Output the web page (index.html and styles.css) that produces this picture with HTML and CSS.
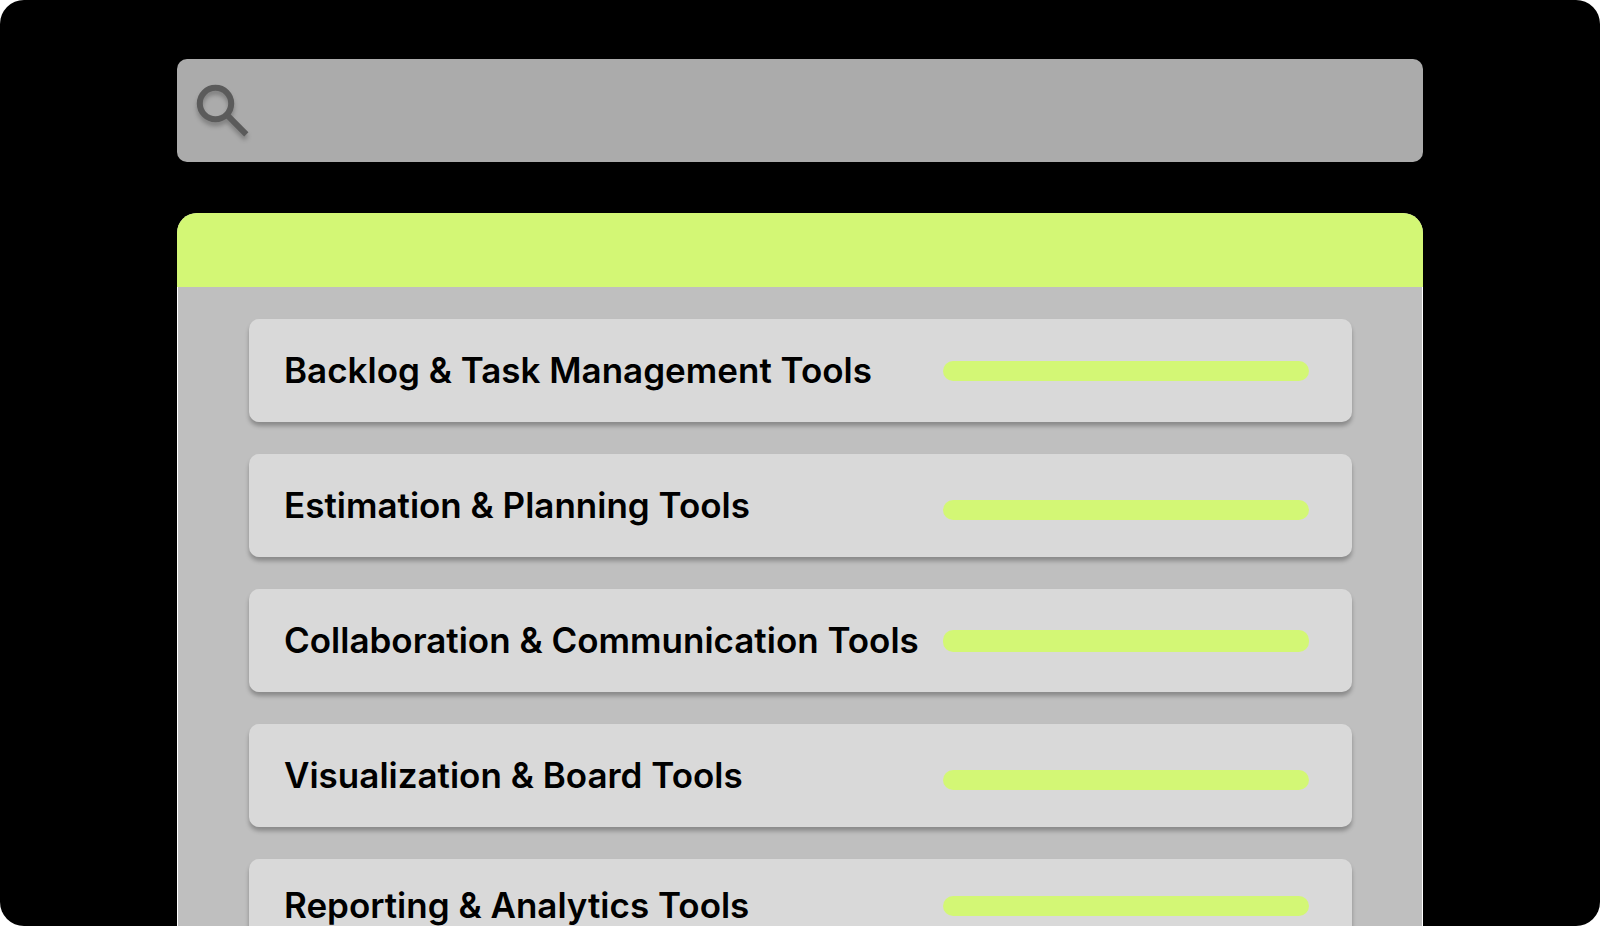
FILE: index.html
```html
<!DOCTYPE html>
<html lang="en">
<head>
<meta charset="utf-8">
<meta name="viewport" content="width=device-width, initial-scale=1">
<title>Tools</title>
<link rel="stylesheet" href="styles.css">
</head>
<body>
<main class="screen">
  <form class="search" role="search">
    <label class="search-label" for="query" aria-label="Search">
      <svg class="search-icon" viewBox="0 0 52 52" aria-hidden="true">
        <circle cx="18.5" cy="18.5" r="15.7" fill="none" stroke="#5b5b5b" stroke-width="6"/>
        <path d="M30.2 30.2L49.3 49.3" fill="none" stroke="#5b5b5b" stroke-width="6"/>
      </svg>
    </label>
    <input class="search-input" id="query" type="search">
  </form>
  <section class="panel">
    <header class="panel-header"></header>
    <ul class="list">
      <li class="card"><span class="card-title">Backlog &amp; Task Management Tools</span><span class="bar"></span></li>
      <li class="card"><span class="card-title">Estimation &amp; Planning Tools</span><span class="bar bar-low"></span></li>
      <li class="card"><span class="card-title">Collaboration &amp; Communication Tools</span><span class="bar bar-thick"></span></li>
      <li class="card"><span class="card-title">Visualization &amp; Board Tools</span><span class="bar bar-low"></span></li>
      <li class="card card-last"><span class="card-title">Reporting &amp; Analytics Tools</span><span class="bar"></span></li>
    </ul>
  </section>
</main>
</body>
</html>
```

FILE: styles.css
```css
* {
  box-sizing: border-box;
}

body {
  margin: 0;
  background: #fff;
  font-family: Inter, "Liberation Sans", sans-serif;
}

.screen {
  display: flex;
  flex-direction: column;
  gap: 51px;
  height: 100vh;
  padding: 59px 177px 0;
  overflow: hidden;
  background: #000;
  border-radius: 24px;
}

.search {
  display: flex;
  flex: none;
  align-items: center;
  gap: 16px;
  height: 103px;
  padding: 0 20px;
  background: #ababab;
  border-radius: 10px;
}

.search-label {
  display: flex;
}

.search-icon {
  width: 52px;
  height: 52px;
  overflow: visible;
  filter: drop-shadow(0 4px 2px rgba(0, 0, 0, 0.25));
}

.search-input {
  flex: 1;
  min-width: 0;
  height: 64px;
  padding: 0;
  border: 0;
  outline: 0;
  background: transparent;
  color: #000;
  font: 500 35px/42px Inter, "Liberation Sans", sans-serif;
}

.panel {
  flex: 1 0 auto;
  background: #bfbfbf;
  border-radius: 20px 20px 0 0;
}

.panel-header {
  height: 74px;
  background: #d3f775;
  border-radius: 20px 20px 0 0;
}

.list {
  display: flex;
  flex-direction: column;
  gap: 32px;
  margin: 0;
  padding: 32px 70px 32px 71px;
  list-style: none;
  border: solid #fff;
  border-width: 0 1px;
}

.card {
  display: flex;
  align-items: center;
  justify-content: space-between;
  gap: 20px;
  height: 103px;
  padding: 0 43px 0 35px;
  background: #d9d9d9;
  border-radius: 10px;
  box-shadow: 0 4px 4px rgba(0, 0, 0, 0.28);
}

.card-last {
  height: 93px;
}

.card-title {
  padding-bottom: 2px;
  color: #000;
  font-size: 35px;
  font-weight: 600;
  line-height: 42px;
  white-space: nowrap;
}

.bar {
  flex: none;
  width: 366px;
  height: 20px;
  background: #d3f775;
  border-radius: 10px;
}

.bar-low {
  margin-top: 8px;
}

.bar-thick {
  height: 22px;
}
```
